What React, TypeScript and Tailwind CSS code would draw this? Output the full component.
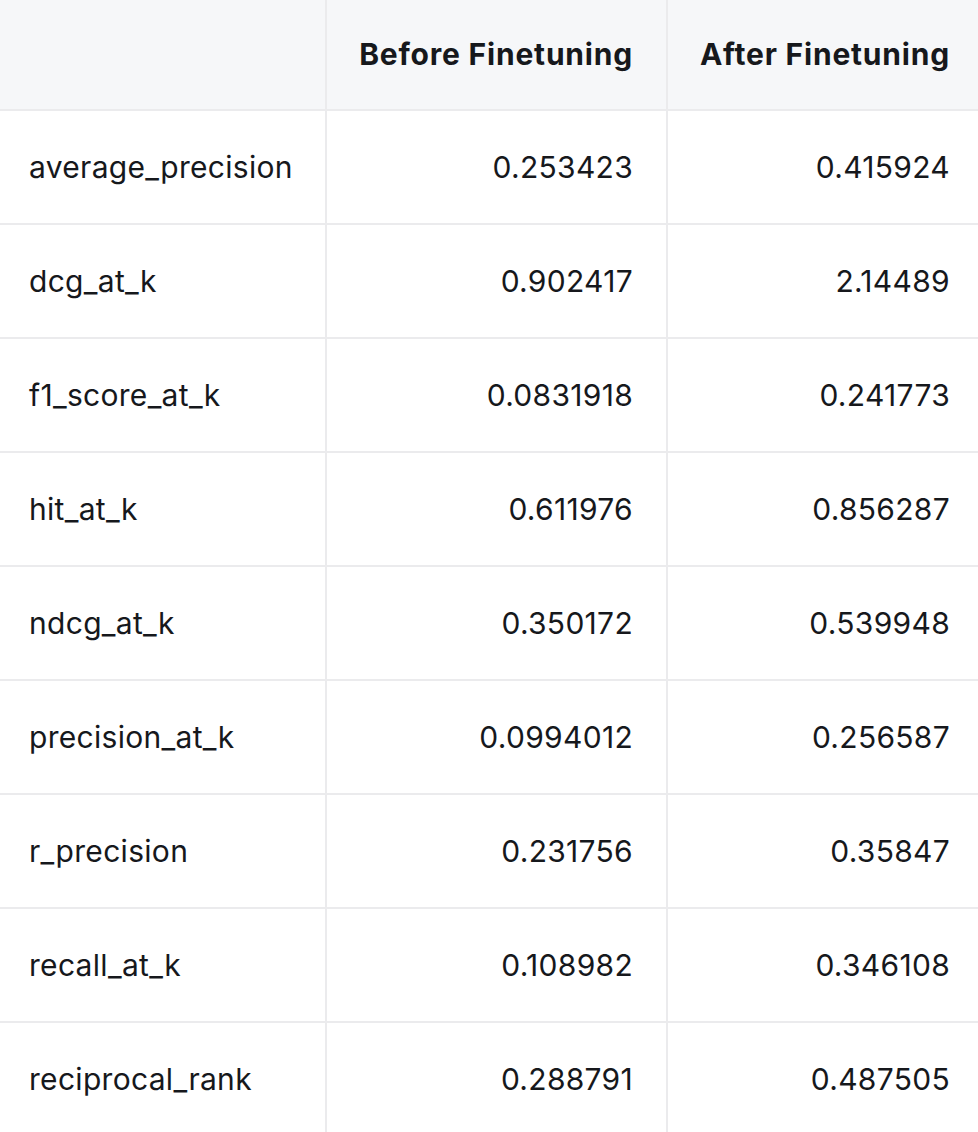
const ROWS: [string, string, string][] = [
  ["average_precision", "0.253423", "0.415924"],
  ["dcg_at_k", "0.902417", "2.14489"],
  ["f1_score_at_k", "0.0831918", "0.241773"],
  ["hit_at_k", "0.611976", "0.856287"],
  ["ndcg_at_k", "0.350172", "0.539948"],
  ["precision_at_k", "0.0994012", "0.256587"],
  ["r_precision", "0.231756", "0.35847"],
  ["recall_at_k", "0.108982", "0.346108"],
  ["reciprocal_rank", "0.288791", "0.487505"],
];

export default function App() {
  return (
    <div className="bg-white w-[978px] h-[1132px] overflow-hidden font-['Inter',sans-serif] text-[30px] text-[#16181c] tracking-[0.3px]">
      <table className="border-collapse table-fixed w-[980px]">
        <colgroup>
          <col className="w-[326px]" />
          <col className="w-[341px]" />
          <col className="w-[313px]" />
        </colgroup>
        <thead>
          <tr className="bg-[#f6f7f9] h-[110px]">
            <th className="border-r-2 border-b-2 border-[#ebebed]" />
            <th className="border-r-2 border-b-2 border-[#ebebed] text-right font-bold pr-[33px] tracking-[0.8px]">
              Before Finetuning
            </th>
            <th className="border-b-2 border-[#ebebed] text-right font-bold pr-[30px] tracking-[0.8px]">
              After Finetuning
            </th>
          </tr>
        </thead>
        <tbody>
          {ROWS.map(([name, before, after]) => (
            <tr key={name} className="h-[114px]">
              <td className="border-r-2 border-b-2 border-[#ebebed] pl-[29px] text-left">
                {name}
              </td>
              <td className="border-r-2 border-b-2 border-[#ebebed] text-right pr-[33px]">
                {before}
              </td>
              <td className="border-b-2 border-[#ebebed] text-right pr-[30px]">
                {after}
              </td>
            </tr>
          ))}
        </tbody>
      </table>
    </div>
  );
}
